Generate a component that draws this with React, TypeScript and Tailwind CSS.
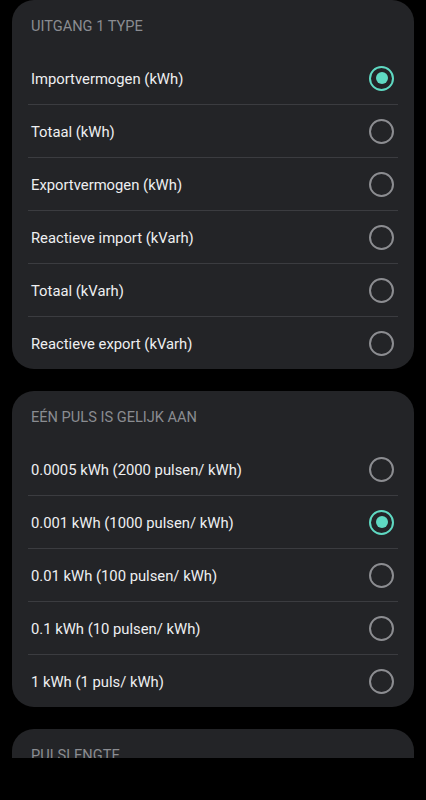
import React from "react";

type Group = { title: string; options: string[]; selected: number };

const groups: Group[] = [
  {
    title: "UITGANG 1 TYPE",
    options: [
      "Importvermogen (kWh)",
      "Totaal (kWh)",
      "Exportvermogen (kWh)",
      "Reactieve import (kVarh)",
      "Totaal (kVarh)",
      "Reactieve export (kVarh)",
    ],
    selected: 0,
  },
  {
    title: "EÉN PULS IS GELIJK AAN",
    options: [
      "0.0005 kWh (2000 pulsen/ kWh)",
      "0.001 kWh (1000 pulsen/ kWh)",
      "0.01 kWh (100 pulsen/ kWh)",
      "0.1 kWh (10 pulsen/ kWh)",
      "1 kWh (1 puls/ kWh)",
    ],
    selected: 1,
  },
  {
    title: "PULSLENGTE",
    options: ["60 ms", "100 ms", "200 ms"],
    selected: 1,
  },
];

function Radio({ on }: { on: boolean }) {
  return on ? (
    <div className="w-[25px] h-[25px] rounded-full border-[2.5px] border-[#5fd9c2] flex items-center justify-center">
      <div className="w-[12px] h-[12px] rounded-full bg-[#5fd9c2]" />
    </div>
  ) : (
    <div className="w-[25px] h-[25px] rounded-full border-2 border-[#8c8d91]" />
  );
}

function Card({ g }: { g: Group }) {
  return (
    <div className="mx-3 rounded-[22px] bg-[#232427] shrink-0">
      <div className="h-[52px] flex items-center pl-[19px] pt-[1px] text-[14.6px] text-[#8a8c91]">
        {g.title}
      </div>
      {g.options.map((o, i) => (
        <div key={o}>
          {i > 0 && <div className="mx-4 h-px bg-[#3b3c40]" />}
          <div className="h-[52px] flex items-center justify-between pl-[19px] pr-[20px]">
            <span className="text-[14.8px] text-[#eeeff1] pt-[2px]">{o}</span>
            <Radio on={i === g.selected} />
          </div>
        </div>
      ))}
    </div>
  );
}

export default function App() {
  return (
    <div
      className="w-[426px] h-[800px] bg-black flex flex-col"
      style={{ fontFamily: "Roboto, 'Noto Sans', sans-serif" }}
    >
      <div className="h-[758px] overflow-hidden flex flex-col gap-[22px]">
        {groups.map((g) => (
          <Card key={g.title} g={g} />
        ))}
      </div>
      <div className="flex-1 bg-black" />
    </div>
  );
}
